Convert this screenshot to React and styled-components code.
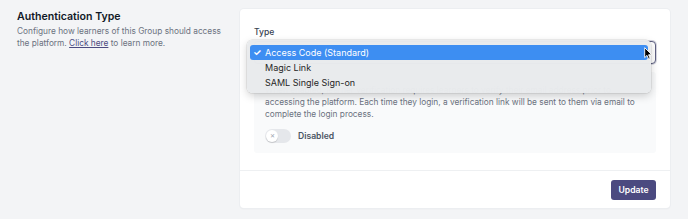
import React from "react";
import styled, { createGlobalStyle } from "styled-components";

const Global = createGlobalStyle`
  html, body { margin: 0; padding: 0; background: #f3f4f6; }
  body { font-family: Inter, "Noto Sans", sans-serif; -webkit-font-smoothing: antialiased; }
  * { box-sizing: border-box; }
`;

const Page = styled.div`
  width: 688px;
  height: 219px;
  display: flex;
  padding: 9px 18px 0 17px;
  overflow: hidden;
`;

const Intro = styled.div`
  width: 223px;
  padding-top: 1px;
  flex-shrink: 0;
`;

const Heading = styled.h2`
  margin: 0 0 1px;
  font-size: 10.6px;
  line-height: 14px;
  font-weight: 600;
  color: #111827;
`;

const Description = styled.p`
  margin: 0;
  font-size: 8.3px;
  line-height: 12px;
  color: #6b7280;
  padding-right: 8px;
`;

const Link = styled.a`
  color: #4b4b80;
  text-decoration: underline;
`;

const Card = styled.div`
  width: 430px;
  height: 199px;
  background: #fff;
  border-radius: 4px;
  box-shadow: 0 0 0 1px #eceef1, 0 1px 2px rgba(0, 0, 0, 0.06);
  display: flex;
  flex-direction: column;
`;

const Body = styled.div`
  padding: 17px 14px 17px 14px;
  display: flex;
  flex-direction: column;
`;

const Label = styled.label`
  font-size: 8.6px;
  line-height: 12px;
  font-weight: 500;
  color: #374151;
  margin-bottom: 3px;
`;

const SelectWrap = styled.div`
  position: relative;
  height: 23px;
  width: 402px;
`;

const SelectBox = styled.div`
  height: 100%;
  border: 1px solid #5f6183;
  border-radius: 4px;
  background: #fff;
  box-shadow: 0 0 0 1px rgba(95, 97, 131, 0.25);
`;

const Menu = styled.ul`
  position: absolute;
  left: -7px;
  top: -1px;
  width: 404px;
  margin: 0;
  padding: 5px 3px 3px;
  list-style: none;
  background: rgba(233, 235, 237, 0.98);
  border-radius: 5px;
  box-shadow: 0 0 0 0.5px rgba(0, 0, 0, 0.12), 0 3px 8px rgba(0, 0, 0, 0.18);
  z-index: 2;
`;

const Item = styled.li`
  height: 15px;
  display: flex;
  align-items: center;
  padding-left: 15px;
  position: relative;
  border-radius: 3px;
  font-size: 9px;
  font-weight: 400;
  color: ${(p) => (p.$active ? "#fff" : "#262626")};
  background: ${(p) => (p.$active ? "#3d8ef2" : "transparent")};
`;

const Check = styled.span`
  position: absolute;
  left: 3px;
  top: 0;
  font-size: 9.5px;
  font-weight: 700;
  line-height: 15px;
`;

const Cursor = styled.svg`
  position: absolute;
  right: 3px;
  top: 6px;
  z-index: 3;
`;

const Panel = styled.div`
  margin-top: 8px;
  background: #f9fafb;
  border-radius: 3px;
  padding: 12px 11px 10px;
  width: 402px;
`;

const PanelText = styled.p`
  margin: 0;
  font-size: 8.3px;
  line-height: 12px;
  color: #6b7280;
`;

const ToggleRow = styled.div`
  display: flex;
  align-items: center;
  gap: 7px;
  margin-top: 9px;
`;

const Track = styled.div`
  width: 26px;
  height: 14px;
  border-radius: 7px;
  background: #e5e7eb;
  padding: 1px;
  display: flex;
`;

const Knob = styled.div`
  width: 12px;
  height: 12px;
  border-radius: 50%;
  background: #fff;
  box-shadow: 0 1px 1px rgba(0, 0, 0, 0.15);
  display: flex;
  align-items: center;
  justify-content: center;
  font-size: 6px;
  line-height: 1;
  color: #9ca3af;
`;

const ToggleLabel = styled.span`
  font-size: 8.6px;
  font-weight: 600;
  color: #4b5563;
`;

const Footer = styled.div`
  border-top: 1px solid #eef0f2;
  height: 38px;
  display: flex;
  align-items: center;
  justify-content: flex-end;
  padding: 0 14px;
`;

const Button = styled.button`
  height: 20px;
  width: 45px;
  border: none;
  border-radius: 3px;
  background: #4b4a80;
  color: #fff;
  font-family: inherit;
  font-size: 8.6px;
  font-weight: 600;
  padding: 0;
`;

export default function App() {
  return (
    <>
      <Global />
      <Page>
        <Intro>
          <Heading>Authentication Type</Heading>
          <Description>
            Configure how learners of this Group should access the platform.{" "}
            <Link href="#">Click here</Link> to learn more.
          </Description>
        </Intro>
        <Card>
          <Body>
            <Label>Type</Label>
            <SelectWrap>
              <SelectBox />
              <Menu>
                <Item $active>
                  <Check>✓</Check>
                  Access Code (Standard)
                </Item>
                <Item>Magic Link</Item>
                <Item>SAML Single Sign-on</Item>
              </Menu>
              <Cursor width="9" height="13" viewBox="0 0 9 13">
                <path d="M0.7 0.7 L0.7 10.6 L3 8.4 L4.6 12.2 L6.2 11.5 L4.6 7.8 L7.8 7.8 Z" fill="#000" stroke="#fff" strokeWidth="0.9" strokeLinejoin="round" />
              </Cursor>
            </SelectWrap>
            <Panel>
              <PanelText>
                When enabled, learner verification requires learners to verify their email address prior to
                accessing the platform. Each time they login, a verification link will be sent to them via email to
                complete the login process.
              </PanelText>
              <ToggleRow>
                <Track>
                  <Knob>✕</Knob>
                </Track>
                <ToggleLabel>Disabled</ToggleLabel>
              </ToggleRow>
            </Panel>
          </Body>
          <Footer>
            <Button>Update</Button>
          </Footer>
        </Card>
      </Page>
    </>
  );
}
